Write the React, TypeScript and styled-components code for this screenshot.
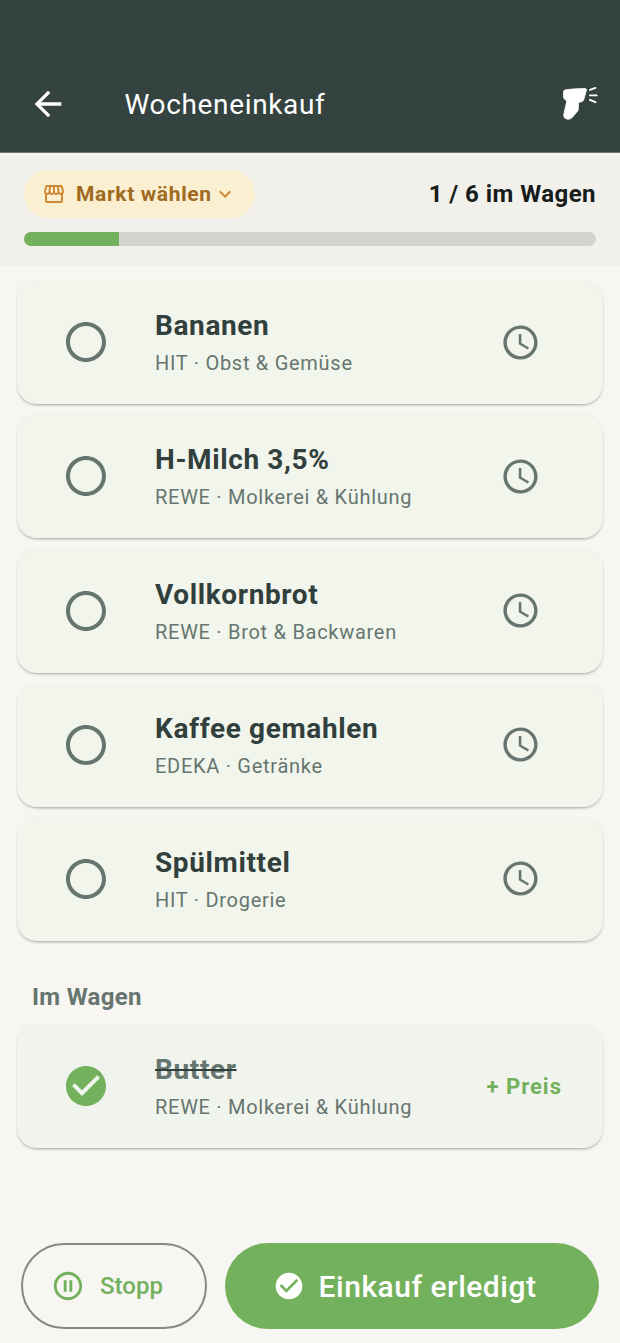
import styled, { createGlobalStyle } from "styled-components";
import {
  MdArrowBack,
  MdCheckCircle,
  MdExpandMore,
  MdOutlinePauseCircle,
  MdOutlineSchedule,
  MdOutlineStorefront,
  MdRadioButtonUnchecked,
} from "react-icons/md";

const GlobalStyle = createGlobalStyle`
  * {
    box-sizing: border-box;
  }

  body {
    margin: 0;
    background: #f7f6f2;
    font-family: Roboto, "Noto Sans", sans-serif;
  }
`;

const items = [
  { name: "Bananen", info: "HIT · Obst & Gemüse" },
  { name: "H-Milch 3,5%", info: "REWE · Molkerei & Kühlung" },
  { name: "Vollkornbrot", info: "REWE · Brot & Backwaren" },
  { name: "Kaffee gemahlen", info: "EDEKA · Getränke" },
  { name: "Spülmittel", info: "HIT · Drogerie" },
];

const ScannerIcon = () => (
  <svg width="36" height="36" viewBox="0 0 36 36" fill="none">
    <path
      d="M2.8 3.8 C8 3 16 2.6 22 2.6 C23.3 2.6 23.8 3.3 23.4 4.4 L20.8 13.4 C20.3 15 19.2 15.8 17.6 16 L15.4 16.4 L15.4 22.6 C15.4 24.6 14.2 25.6 13 27 L9.8 30.8 C8.4 32.6 6.6 33.4 4.6 33.2 C1.6 32.8 0.2 30.8 0.8 28.2 L3.6 16 C3.8 15 3.2 14.6 2.2 13.8 C0.8 12.8 0.4 11.2 0.4 9.6 L0.4 6.4 C0.4 4.8 1.2 4 2.8 3.8 Z"
      fill="#fff"
      stroke="#fff"
      strokeWidth="0.8"
      strokeLinejoin="round"
    />
    <path
      d="M26.9 3.9 L32.5 1.9 M26.9 9.3 L33.8 9.3 M26.9 13.8 L32.5 16.2"
      stroke="#fff"
      strokeWidth="1.8"
      strokeLinecap="round"
    />
  </svg>
);

export default function App() {
  return (
    <Page>
      <GlobalStyle />
      <AppBar>
        <BackButton>
          <MdArrowBack size={40} />
        </BackButton>
        <Title>Wocheneinkauf</Title>
        <ScannerIcon />
      </AppBar>
      <Summary>
        <SummaryRow>
          <MarketChip>
            <MdOutlineStorefront size={24} color="#d08a36" />
            <span>Markt wählen</span>
            <ChipChevron>
              <MdExpandMore size={24} color="#d08a36" />
            </ChipChevron>
          </MarketChip>
          <CartCount>1 / 6 im Wagen</CartCount>
        </SummaryRow>
        <ProgressTrack>
          <ProgressFill style={{ width: `${(1 / 6) * 100}%` }} />
        </ProgressTrack>
      </Summary>
      <Content>
        <ItemList>
          {items.map((item) => (
            <ItemCard key={item.name}>
              <CheckSlot>
                <MdRadioButtonUnchecked size={48} color="#66756f" />
              </CheckSlot>
              <ItemText>
                <ItemName>{item.name}</ItemName>
                <ItemInfo>{item.info}</ItemInfo>
              </ItemText>
              <ClockSlot>
                <MdOutlineSchedule size={41} color="#66756f" />
              </ClockSlot>
            </ItemCard>
          ))}
        </ItemList>
        <SectionLabel>Im Wagen</SectionLabel>
        <ItemCard $done>
          <CheckSlot>
            <MdCheckCircle size={48} color="#73b15d" />
          </CheckSlot>
          <ItemText>
            <ItemName $done>Butter</ItemName>
            <ItemInfo>REWE · Molkerei & Kühlung</ItemInfo>
          </ItemText>
          <PriceLink>+ Preis</PriceLink>
        </ItemCard>
      </Content>
      <Footer>
        <StopButton>
          <MdOutlinePauseCircle size={34} />
          <span>Stopp</span>
        </StopButton>
        <DoneButton>
          <MdCheckCircle size={32} />
          <span>Einkauf erledigt</span>
        </DoneButton>
      </Footer>
    </Page>
  );
}

const Page = styled.div`
  display: flex;
  flex-direction: column;
  width: 620px;
  height: 1343px;
  overflow: hidden;
  background: #f7f6f2;
`;

const AppBar = styled.header`
  display: flex;
  align-items: center;
  height: 153px;
  padding: 56px 21px 0 28px;
  background: #344340;
  border-bottom: 1px solid #6d7875;
  color: #fff;
`;

const BackButton = styled.div`
  display: flex;
  width: 96.5px;
`;

const Title = styled.h1`
  flex: 1;
  margin: 0;
  font-size: 28px;
  font-weight: 400;
  letter-spacing: 0.65px;
  color: #fff;
`;

const Summary = styled.section`
  padding: 17px 24px 20px;
  background: #f2f0eb;
`;

const SummaryRow = styled.div`
  display: flex;
  align-items: center;
  justify-content: space-between;
`;

const MarketChip = styled.div`
  display: flex;
  align-items: center;
  gap: 10px;
  width: 231px;
  height: 48px;
  padding-left: 18px;
  border-radius: 24px;
  background: #fbefd2;
  color: #a06a1f;
  font-size: 21px;
  font-weight: 700;
  letter-spacing: 0.65px;
`;

const ChipChevron = styled.span`
  display: flex;
  margin-left: -9px;
`;

const CartCount = styled.div`
  font-size: 24px;
  font-weight: 700;
  letter-spacing: 0.45px;
  color: #171c1a;
`;

const ProgressTrack = styled.div`
  height: 14px;
  margin-top: 14px;
  border-radius: 7px;
  overflow: hidden;
  background: #d4d3cd;
`;

const ProgressFill = styled.div`
  height: 100%;
  background: #73b15d;
`;

const Content = styled.main`
  flex: 1;
  padding: 14px 17px 0;
`;

const ItemList = styled.div`
  display: flex;
  flex-direction: column;
  gap: 9.9px;
`;

const ItemCard = styled.article<{ $done?: boolean }>`
  display: flex;
  align-items: center;
  height: 124.3px;
  border-radius: 20px;
  background: ${(p) => (p.$done ? "#f1f3ed" : "#f1f5ec")};
  box-shadow: 0 2px 3px -1px rgba(40, 50, 45, 0.4), 0 0 2px rgba(40, 50, 45, 0.06);
`;

const CheckSlot = styled.div`
  display: flex;
  justify-content: center;
  width: 138px;
`;

const ItemText = styled.div`
  flex: 1;
  padding-top: 2px;
`;

const ItemName = styled.div<{ $done?: boolean }>`
  font-size: 28px;
  font-weight: 700;
  line-height: 32px;
  letter-spacing: 0.62px;
  color: ${(p) => (p.$done ? "#66756f" : "#31403c")};
  text-decoration: ${(p) => (p.$done ? "line-through" : "none")};
  text-decoration-color: #31403c;
`;

const ItemInfo = styled.div`
  margin-top: 8px;
  font-size: 20px;
  line-height: 26px;
  letter-spacing: 0.72px;
  color: #66756f;
`;

const ClockSlot = styled.div`
  display: flex;
  justify-content: center;
  width: 166px;
`;

const PriceLink = styled.div`
  padding: 1px 41px 0 0;
  font-size: 22px;
  font-weight: 700;
  letter-spacing: 1px;
  color: #73b15d;
`;

const SectionLabel = styled.h2`
  margin: 39.5px 0 11px 15px;
  font-size: 24px;
  line-height: 32px;
  font-weight: 700;
  letter-spacing: 0.3px;
  color: #66756f;
`;

const Footer = styled.footer`
  display: flex;
  gap: 18px;
  height: 114px;
  padding: 13px 21px 14px;
  background: #f7f6f2;
  border-top: 1px solid #f3f2ee;
`;

const StopButton = styled.div`
  display: flex;
  align-items: center;
  justify-content: center;
  gap: 15px;
  width: 186px;
  padding-right: 14px;
  border: 2px solid #858981;
  border-radius: 43px;
  color: #73b15d;
  font-size: 24px;
  font-weight: 500;
`;

const DoneButton = styled.div`
  display: flex;
  align-items: center;
  justify-content: center;
  gap: 14px;
  flex: 1;
  padding-right: 15px;
  border-radius: 43px;
  background: #73b15d;
  color: #fff;
  font-size: 30px;
  font-weight: 500;
  letter-spacing: 0.5px;
`;
